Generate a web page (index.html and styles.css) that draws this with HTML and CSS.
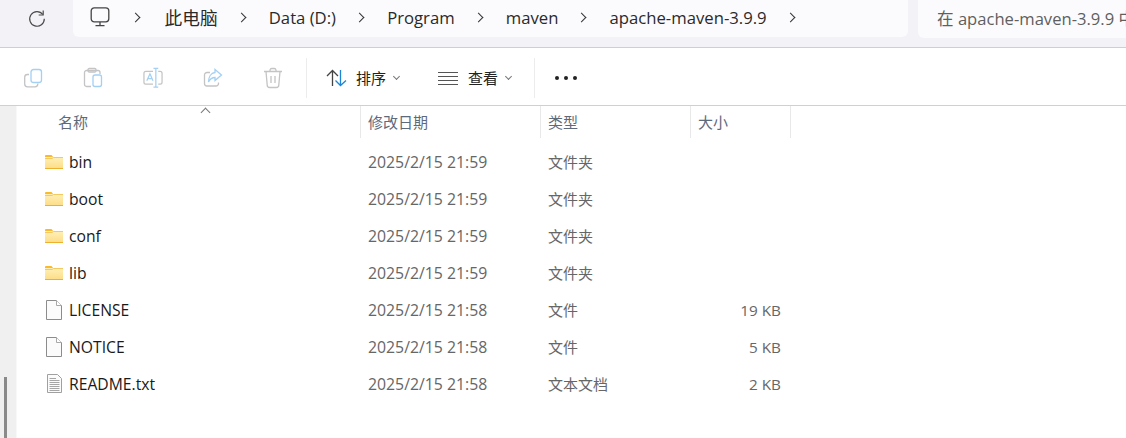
FILE: index.html
```html
<!DOCTYPE html>
<html>
<head>
    <meta charset="UTF-8">
    <title>apache-maven-3.9.9</title>
    <link rel="stylesheet" href="styles.css">
</head>
<body>
    <!-- address row -->
    <header class="nav-row">
        <button class="refresh">
            <svg width="20" height="20" viewBox="0 0 20 20" fill="none" stroke="#4a4a4a" stroke-width="1.2">
                <path d="M15.8 6.500A7.300 7.300 0 1 0 17.300 10.800"/>
                <path d="M16.200 2.500V7H11.700"/>
            </svg>
        </button>
        <div class="address-bar">
            <svg class="pc-icon" width="20" height="20" viewBox="0 0 20 20" fill="none" stroke="#444" stroke-width="1.3">
                <rect x="1.2" y="0.8" width="17.6" height="14" rx="3"/>
                <path d="M10 15V18M5.5 18.6H14.5"/>
            </svg>
            <span class="chev"></span><span class="crumb crumb-cjk">此电脑</span>
            <span class="chev"></span><span class="crumb">Data (D:)</span>
            <span class="chev"></span><span class="crumb">Program</span>
            <span class="chev"></span><span class="crumb">maven</span>
            <span class="chev"></span><span class="crumb">apache-maven-3.9.9</span>
            <span class="chev"></span>
        </div>
        <div class="search-box">在 apache-maven-3.9.9 中搜索</div>
    </header>

    <!-- command bar -->
    <div class="toolbar">
        <div class="tool-group">
            <span class="tool">
                <svg width="20" height="20" viewBox="0 0 20 20" fill="none" stroke-width="1.3">
                    <path d="M6 6.500H4.500A2.800 2.800 0 0 0 1.700 9.300V16A2.800 2.800 0 0 0 4.500 18.800H12A2.800 2.800 0 0 0 14.800 16V15.500" stroke="#c4c4c4"/>
                    <rect x="8" y="1.500" width="10.500" height="13" rx="2.500" stroke="#a3d0f3"/>
                </svg>
            </span>
            <span class="tool">
                <svg width="20" height="22" viewBox="0 0 20 22" fill="none" stroke-width="1.300">
                    <path d="M8 19.500H3.500A2 2 0 0 1 1.500 17.500V5.500A2 2 0 0 1 3.500 3.500H15A2 2 0 0 1 17 5.500V7" stroke="#c4c4c4"/>
                    <rect x="5" y="1.500" width="8" height="3.500" rx="1.200" stroke="#c4c4c4"/>
                    <rect x="10" y="8" width="8.500" height="11.500" rx="2" stroke="#a3d0f3"/>
                </svg>
            </span>
            <span class="tool">
                <svg width="21" height="22" viewBox="0 0 21 22" fill="none" stroke-width="1.300">
                    <path d="M10.500 4H3A2 2 0 0 0 1 6V15.500A2 2 0 0 0 3 17.500H10.500M16 4H18A2 2 0 0 1 20 6V15.500A2 2 0 0 1 18 17.500H16" stroke="#c4c4c4"/>
                    <path d="M11 1H16M13.500 1V20.500M11 20.500H16M4 14L7.300 6.500L10.500 14M5.200 11.700H9.400" stroke="#a3d0f3"/>
                </svg>
            </span>
            <span class="tool">
                <svg width="20" height="20" viewBox="0 0 20 20" fill="none" stroke-width="1.300">
                    <path d="M7 4.500H4A2.500 2.500 0 0 0 1.500 7V15.500A2.500 2.500 0 0 0 4 18H13A2.500 2.500 0 0 0 15.500 15.500V14.500" stroke="#c4c4c4"/>
                    <path d="M12 1.500L18.500 7L12 12.500V9.500C9 9.500 7 11 5.500 14C5.500 9 8 5 12 4.500Z" stroke="#a3d0f3"/>
                </svg>
            </span>
            <span class="tool">
                <svg width="20" height="22" viewBox="0 0 20 22" fill="none" stroke="#c4c4c4" stroke-width="1.300">
                    <path d="M1 4.500H19M7 4.500V3A1.800 1.800 0 0 1 8.800 1.500H11.200A1.800 1.800 0 0 1 13 3V4.500"/>
                    <path d="M3 4.500L4.200 18A2.500 2.500 0 0 0 6.700 20.500H13.300A2.500 2.500 0 0 0 15.800 18L17 4.500"/>
                    <path d="M8 9V16M12 9V16"/>
                </svg>
            </span>
        </div>
        <span class="tool-sep"></span>
        <div class="menu-btn sort-btn">
            <svg width="21" height="18" viewBox="0 0 21 18" fill="none" stroke-width="1.300">
                <path d="M6.500 17V1.500M1 7L6.500 1.500L12 7" stroke="#444"/>
                <path d="M14.500 1V16.500M9.500 11.500L14.500 16.500L20 11.500" stroke="#1b86d6"/>
            </svg>
            <span>排序</span><i class="caret"></i>
        </div>
        <div class="menu-btn view-btn">
            <svg width="20" height="14" viewBox="0 0 20 14" fill="none" stroke="#555" stroke-width="1">
                <path d="M0 1.500H20M0 5.500H20M0 9.500H20M0 13.500H20"/>
            </svg>
            <span>查看</span><i class="caret"></i>
        </div>
        <span class="tool-sep"></span>
        <div class="more"><b></b><b></b><b></b></div>
    </div>

    <div class="body-row">
        <aside class="side-pane"><span class="side-thumb"></span></aside>
        <main class="file-pane">
            <div class="file-head">
                <span class="col-name">名称<i class="sort-up"></i></span>
                <span>修改日期</span>
                <span>类型</span>
                <span>大小</span>
            </div>

            <div class="file-row">
                <span class="file-name"><svg class="ico" width="18" height="14"><use href="#folder"/></svg>bin</span>
                <span class="date">2025/2/15 21:59</span><span>文件夹</span><span class="size"></span>
            </div>
            <div class="file-row">
                <span class="file-name"><svg class="ico" width="18" height="14"><use href="#folder"/></svg>boot</span>
                <span class="date">2025/2/15 21:59</span><span>文件夹</span><span class="size"></span>
            </div>
            <div class="file-row">
                <span class="file-name"><svg class="ico" width="18" height="14"><use href="#folder"/></svg>conf</span>
                <span class="date">2025/2/15 21:59</span><span>文件夹</span><span class="size"></span>
            </div>
            <div class="file-row">
                <span class="file-name"><svg class="ico" width="18" height="14"><use href="#folder"/></svg>lib</span>
                <span class="date">2025/2/15 21:59</span><span>文件夹</span><span class="size"></span>
            </div>
            <div class="file-row">
                <span class="file-name"><svg class="ico" width="18" height="20"><use href="#blank"/></svg>LICENSE</span>
                <span class="date">2025/2/15 21:58</span><span>文件</span><span class="size">19 KB</span>
            </div>
            <div class="file-row">
                <span class="file-name"><svg class="ico" width="18" height="20"><use href="#blank"/></svg>NOTICE</span>
                <span class="date">2025/2/15 21:58</span><span>文件</span><span class="size">5 KB</span>
            </div>
            <div class="file-row">
                <span class="file-name"><svg class="ico" width="18" height="20"><use href="#textfile"/></svg>README.txt</span>
                <span class="date">2025/2/15 21:58</span><span>文本文档</span><span class="size">2 KB</span>
            </div>
        </main>
    </div>

    <!-- shared file icons -->
    <svg class="defs" width="0" height="0">
        <defs>
            <linearGradient id="folderFill" x1="0" y1="0" x2="0" y2="1">
                <stop offset="0" stop-color="#fff0b8"/>
                <stop offset="1" stop-color="#fddc85"/>
            </linearGradient>
            <symbol id="folder" viewBox="0 0 18 14">
                <path d="M0 1A1 1 0 0 1 1 0H6.500L8.500 2.500H0Z" fill="#fbb92c"/>
                <rect x="0" y="2" width="18" height="12" fill="url(#folderFill)"/>
                <path d="M0 3.500H7L8.500 2.500H18" fill="none" stroke="#f5c860" stroke-width="1"/>
                <path d="M0 13.500H18" stroke="#efb02e" stroke-width="1"/>
            </symbol>
            <symbol id="blank" viewBox="0 0 18 20">
                <path d="M1.500 0.500H11.500L16.500 5.500V19.500H1.500Z" fill="#fbfbfb" stroke="#8c8c8c"/>
                <path d="M11.500 0.500V5.500H16.500" fill="#fff" stroke="#a8a8a8"/>
            </symbol>
            <symbol id="textfile" viewBox="0 0 18 20">
                <path d="M2.500 0.500H12.500L16.500 4.500V18.500H2.500Z" fill="#fbfbfb" stroke="#a0a0a0"/>
                <path d="M4.500 4.500H11M4.500 6.500H14.500M4.500 8.500H14.500M4.500 10.500H14.500M4.500 12.500H14.500M4.500 14.500H14.500M4.500 16.500H14.500" stroke="#a6a6a6" stroke-width="1"/>
            </symbol>
        </defs>
    </svg>
</body>
</html>
```

FILE: styles.css
```css
* {
    box-sizing: border-box;
}

html, body {
    height: 100%;
}

body {
    margin: 0;
    overflow: hidden;
    background: #fff;
    font-family: "Open Sans", "Noto Sans CJK SC", sans-serif;
    font-size: 14px;
    color: #1a1a1a;
    display: flex;
    flex-direction: column;
}

/* address row */
.nav-row {
    height: 48px;
    flex: none;
    display: flex;
    align-items: flex-start;
    background: #f3f3f7;
    border-bottom: 1px solid #cfcdd9;
}

.refresh {
    width: 73px;
    height: 37px;
    padding: 0 0 2px;
    border: 0;
    background: none;
    display: flex;
    align-items: center;
    justify-content: center;
}

.address-bar {
    width: 835px;
    height: 37px;
    padding: 0 0 3px 17px;
    display: flex;
    align-items: center;
    background: #fbfbfe;
    border-radius: 0 0 6px 6px;
    font-size: 16.700px;
    color: #2a2a2a;
}

.crumb-cjk {
    margin-left: 2px;
    font-size: 17.700px;
}

.pc-icon {
    margin-right: 1.500px;
}

.chev {
    width: 7px;
    height: 7px;
    margin: 0 24.100px 0 20px;
    border-top: 1.300px solid #333;
    border-right: 1.300px solid #333;
    transform: rotate(45deg);
}

.search-box {
    width: 208px;
    height: 38px;
    margin-left: 10px;
    padding: 0 0 2px 19px;
    display: flex;
    align-items: center;
    white-space: nowrap;
    overflow: hidden;
    background: #fbfbfe;
    border-radius: 0 0 0 6px;
    font-size: 16.600px;
    color: #5f5f5f;
}

/* command bar */
.toolbar {
    height: 58px;
    flex: none;
    padding-top: 2px;
    display: flex;
    align-items: center;
    background: #fff;
    border-bottom: 1px solid #d0ced8;
}

.tool-group {
    display: flex;
    width: 306px;
    padding-left: 23px;
    gap: 40px;
}

.tool {
    width: 20px;
    height: 22px;
    display: flex;
    align-items: center;
    justify-content: center;
}

.tool-sep {
    width: 1px;
    height: 40px;
    background: #ececec;
}

.menu-btn {
    display: flex;
    align-items: center;
    font-size: 15px;
    color: #222;
}

.sort-btn {
    margin-left: 19px;
    width: 112px;
}

.sort-btn svg {
    margin-right: 9px;
}

.view-btn {
    width: 96px;
}

.view-btn svg {
    margin-right: 10px;
}

.caret {
    width: 5px;
    height: 5px;
    margin: -3px 0 0 8px;
    border-right: 1px solid #777;
    border-bottom: 1px solid #777;
    transform: rotate(45deg);
}

.more {
    display: flex;
    gap: 5px;
    margin-left: 20px;
}

.more b {
    width: 4px;
    height: 4px;
    border-radius: 50%;
    background: #222;
}

/* body */
.body-row {
    flex: 1;
    display: flex;
    min-height: 0;
}

.side-pane {
    width: 17px;
    position: relative;
    background: #f0f0f0;
    border-right: 1px solid #f8f8f8;
}

.side-thumb {
    position: absolute;
    left: 4px;
    bottom: 0;
    width: 3px;
    height: 61px;
    background: #8a8a8a;
}

.file-pane {
    flex: 1;
}

.file-head,
.file-row {
    display: grid;
    grid-template-columns: 344px 180px 150px 100px;
}

.file-head {
    height: 37px;
    color: #5d6a7c;
    font-size: 15px;
    line-height: 20px;
}

.file-head span {
    padding: 6px 0 0 7px;
    border-right: 1px solid #e8e8e8;
    height: 32px;
}

.file-head .col-name {
    position: relative;
    padding-left: 41px;
}

.sort-up {
    position: absolute;
    left: 185px;
    top: 3px;
    width: 7px;
    height: 7px;
    border-top: 1px solid #777;
    border-left: 1px solid #777;
    transform: rotate(45deg);
}

.file-row {
    height: 37px;
    align-items: center;
    color: #666;
    font-size: 15px;
    line-height: 20px;
}

.file-row > span {
    padding-left: 7px;
}

.file-row .file-name {
    display: flex;
    align-items: center;
    padding-left: 28px;
    font-size: 15.700px;
    color: #1a1a1a;
}

.file-row .date {
    font-size: 15.800px;
}

.ico {
    margin-right: 6px;
    flex: none;
}

.file-row .size {
    padding: 0 10px 0 0;
    font-size: 15.300px;
    text-align: right;
}

.defs {
    position: absolute;
}
```
